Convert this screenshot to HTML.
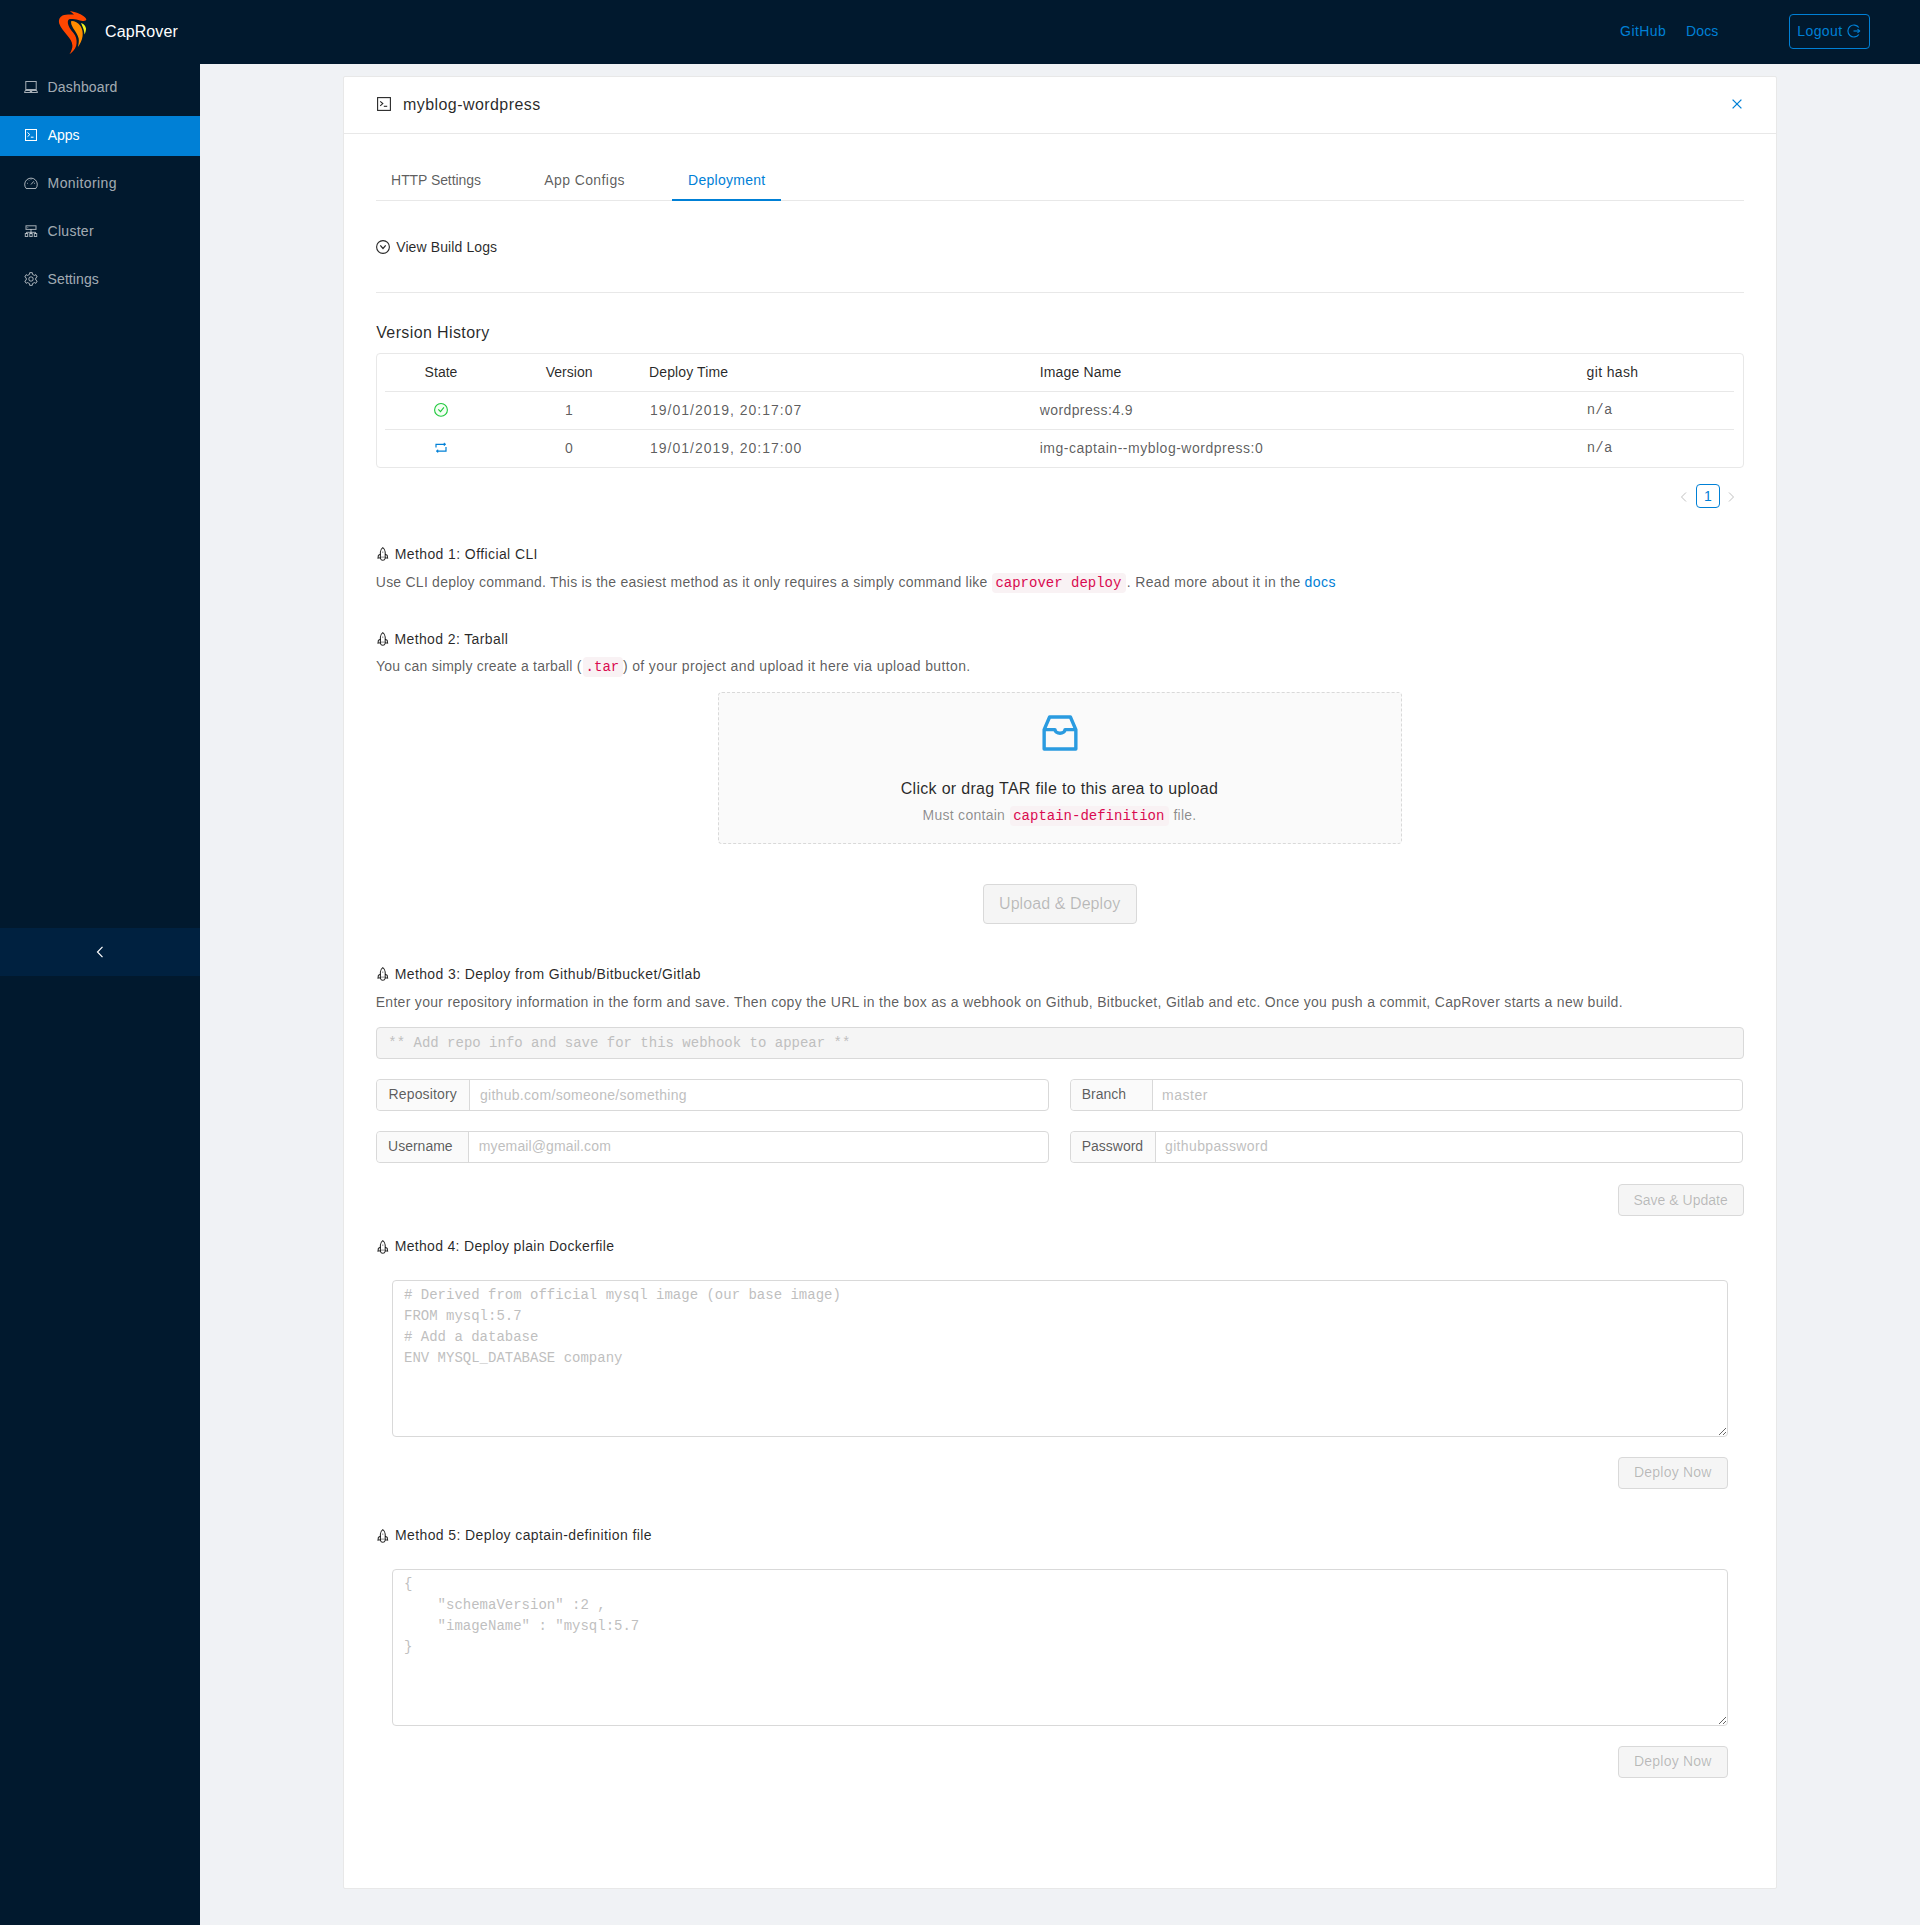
<!DOCTYPE html>
<html><head><meta charset="utf-8"><title>CapRover</title>
<style>
html,body{margin:0;padding:0}
body{width:1920px;height:1925px;position:relative;overflow:hidden;background:#f0f2f5;font-family:"Liberation Sans",sans-serif;font-size:14px;-webkit-font-smoothing:antialiased}
.a{position:absolute;box-sizing:border-box}
.t{position:absolute;white-space:nowrap;line-height:20px}
svg{position:absolute;overflow:visible}
.btn-d{position:absolute;box-sizing:border-box;background:#f5f5f5;border:1px solid #d9d9d9;border-radius:4px}
.ig{position:absolute;box-sizing:border-box;border:1px solid #d9d9d9;border-radius:4px;background:#fff;height:32px}
.ig .ad{position:absolute;left:0;top:0;bottom:0;background:#fafafa;border-right:1px solid #d9d9d9;border-radius:4px 0 0 4px}
.code{position:absolute;background:#f9f2f4;border-radius:4px;height:19.5px}
textarea{position:absolute;box-sizing:border-box;margin:0;border:1px solid #d9d9d9;border-radius:4px;background:#fff;padding:4px 11px;font-family:"Liberation Mono",monospace;font-size:14px;line-height:21px;color:rgba(0,0,0,.65);outline:none;resize:vertical}
textarea::placeholder{color:#bfbfbf;opacity:1}
</style></head>
<body>
<!-- header -->
<div class="a" style="left:0;top:0;width:1920px;height:64px;background:#01192e"></div>
<svg style="left:50px;top:0" width="50" height="64" viewBox="50 0 50 64">
 <path fill="#ff4600" d="M74.0 14.5 L69.9 10.9 C74 11.5 80 13 83.7 16.3 C85.5 17.5 86.5 19 86.3 19.8 C86 21.2 83 21.4 78.3 20.0 C75 19.2 71 18.8 69.1 19.3 C67.5 20 67.5 23 68.5 25.5 C69.5 29 73 32 75 35.2 C76.8 38.5 77 42.5 76.2 45.8 C75 49.5 72 52.5 69.4 54.3 C71.5 51 72.5 48 72.4 45.5 C72.2 41.5 70 38.5 67.5 35.7 C64 31.5 60.5 27.5 59.2 23.5 C58.3 20 59.5 17 62.5 15.5 C65.5 14.2 70 14.3 74.0 14.5 Z"/>
 <path fill="#ff8c00" d="M71.3 21.1 C74 20.8 78 22.5 80.5 26 C82.5 29 83 33 82.6 36 C82.2 40 80 44 77.8 47.3 C78.6 44 79.2 41 78.6 38.2 C77.8 35 75.5 31.5 73.2 28.2 C71.5 25.5 70.6 23 71.3 21.1 Z"/>
 <path fill="#f2f21e" d="M81 23 C83.5 23.8 85.8 26 86 28.5 C86.1 30.5 85.3 33 84.5 34.6 C84.3 32 83.8 29.5 82.8 27.3 C82.2 25.8 81.5 24.3 81 23 Z"/>
</svg>
<div class="a" style="left:1789px;top:14px;width:81px;height:35px;border:1px solid #0080d6;border-radius:4px"></div>
<svg style="left:1847px;top:24px" width="14" height="14" viewBox="0 0 14 14" fill="none" stroke="#0080d6" stroke-width="1.2">
 <path d="M11.8 3.5 A6 6 0 1 0 11.8 10.5"/><path d="M6.5 7 H12.5"/><path d="M10.5 5.2 L12.6 7 L10.5 8.8" stroke-width="1.1"/>
</svg>
<!-- sider -->
<div class="a" style="left:0;top:64px;width:200px;height:1861px;background:#01192e"></div>
<div class="a" style="left:0;top:116px;width:200px;height:40px;background:#0080d6"></div>
<svg style="left:24px;top:80px" width="14" height="14" viewBox="0 0 14 14" fill="none" stroke="rgba(255,255,255,.65)" stroke-width="1">
 <rect x="1.8" y="1.5" width="10.4" height="8"/><path d="M0.5 12.5 L1.3 10.5 H12.7 L13.5 12.5 Z"/><path d="M5.8 11.5 H8.2"/>
</svg>
<svg style="left:24px;top:128px" width="14" height="14" viewBox="0 0 14 14" fill="none" stroke="#fff" stroke-width="1">
 <rect x="1.5" y="1.5" width="11" height="11"/><path d="M3.5 4.5 L5.8 6.6 L3.5 8.7"/><path d="M6.8 9.2 H9.5"/>
</svg>
<svg style="left:24px;top:176px" width="14" height="14" viewBox="0 0 14 14" fill="none" stroke="rgba(255,255,255,.65)" stroke-width="1">
 <path d="M2.2 12.5 A6.3 6.3 0 1 1 11.8 12.5 Z"/><path d="M7 8.5 L9.8 5.3"/><path d="M3 7.3 H3.8 M10.2 7.3 H11 M4.5 3.8 L5 4.4 M7 2.8 V3.6"/>
</svg>
<svg style="left:24px;top:224px" width="14" height="14" viewBox="0 0 14 14" fill="none" stroke="rgba(255,255,255,.65)" stroke-width="1">
 <rect x="2" y="1.8" width="10" height="3.6"/><path d="M7 5.4 V10 M2.5 8.3 H11.5 M2.5 8.3 V9.5 M11.5 8.3 V9.5"/><rect x="1.3" y="9.5" width="2.4" height="3"/><rect x="5.8" y="9.5" width="2.4" height="3"/><rect x="10.3" y="9.5" width="2.4" height="3"/><path d="M3.5 3.6 H4.2"/>
</svg>
<svg style="left:24px;top:272px" width="14" height="14" viewBox="0 0 14 14" fill="none" stroke="rgba(255,255,255,.65)" stroke-width="1">
 <path id="gear" d="M5.55 2.32 L5.71 0.63 L8.29 0.63 L8.45 2.32 L10.33 3.41 L11.87 2.70 L13.16 4.93 L11.78 5.91 L11.78 8.09 L13.16 9.07 L11.87 11.30 L10.33 10.59 L8.45 11.68 L8.29 13.37 L5.71 13.37 L5.55 11.68 L3.67 10.59 L2.13 11.30 L0.84 9.07 L2.22 8.09 L2.22 5.91 L0.84 4.93 L2.13 2.70 L3.67 3.41 Z"/><circle cx="7" cy="7" r="2.2"/>
</svg>
<div class="a" style="left:0;top:928px;width:200px;height:48px;background:#002140"></div>
<svg style="left:95px;top:946px" width="10" height="12" viewBox="0 0 10 12" fill="none" stroke="#fff" stroke-width="1.2">
 <path d="M7.5 0.8 L2.5 6 L7.5 11.2"/>
</svg>
<!-- card -->
<div class="a" style="left:343px;top:76px;width:1434px;height:1813px;background:#fff;border:1px solid #e8e8e8;border-radius:2px"></div>
<div class="a" style="left:344px;top:133px;width:1432px;height:1px;background:#e8e8e8"></div>
<svg style="left:377px;top:97px" width="14" height="14" viewBox="0 0 14 14" fill="none" stroke="rgba(0,0,0,.85)" stroke-width="1.1">
 <rect x="0.6" y="0.6" width="12.8" height="12.8"/><path d="M3.2 4.3 L5.8 6.6 L3.2 8.9"/><path d="M6.8 9.3 H10.2"/>
</svg>
<svg style="left:1732px;top:99px" width="10" height="10" viewBox="0 0 10 10" fill="none" stroke="#0080d6" stroke-width="1.3">
 <path d="M0.6 0.6 L9.4 9.4 M9.4 0.6 L0.6 9.4"/>
</svg>
<!-- tabs -->
<div class="a" style="left:376px;top:200px;width:1368px;height:1px;background:#e8e8e8"></div>
<div class="a" style="left:672px;top:199px;width:109px;height:2px;background:#0080d6"></div>
<svg style="left:376px;top:240px" width="14" height="14" viewBox="0 0 14 14" fill="none" stroke="rgba(0,0,0,.85)" stroke-width="1.1">
 <circle cx="7" cy="7" r="6.4"/><path d="M4.3 5.4 L7 8.5 L9.7 5.4" stroke-width="1.2"/>
</svg>
<div class="a" style="left:376px;top:292px;width:1368px;height:1px;background:#e8e8e8"></div>
<!-- table -->
<div class="a" style="left:376px;top:353px;width:1368px;height:115px;border:1px solid #e8e8e8;border-radius:4px"></div>
<div class="a" style="left:385px;top:391px;width:1349px;height:1px;background:#e8e8e8"></div>
<div class="a" style="left:385px;top:429px;width:1349px;height:1px;background:#e8e8e8"></div>
<svg style="left:434px;top:403px" width="14" height="14" viewBox="0 0 14 14" fill="none" stroke="#1ec83c" stroke-width="1.1">
 <circle cx="7" cy="6.9" r="6.4" fill="#f3fff3"/><path d="M4.3 6.3 L6.5 8.7 L9.9 4.3"/>
</svg>
<svg style="left:435px;top:442px" width="12" height="12" viewBox="0 0 12 12" fill="none" stroke="#0080d6" stroke-width="1.2">
 <path d="M1 5.5 V2.3 H10"/><path d="M9 0.9 L10.9 2.3 L9 3.7 Z" fill="#0080d6" stroke-width="0.6"/>
 <path d="M11 5 V9.1 H2"/><path d="M3 7.7 L1.1 9.1 L3 10.5 Z" fill="#0080d6" stroke-width="0.6"/>
</svg>
<!-- pagination -->
<svg style="left:1680px;top:492px" width="8" height="10" viewBox="0 0 8 10" fill="none" stroke="rgba(0,0,0,.25)" stroke-width="1">
 <path d="M6 0.5 L1.5 5 L6 9.5"/>
</svg>
<div class="a" style="left:1696px;top:484px;width:24px;height:24px;border:1px solid #0080d6;border-radius:4px"></div>
<svg style="left:1728px;top:492px" width="8" height="10" viewBox="0 0 8 10" fill="none" stroke="rgba(0,0,0,.25)" stroke-width="1">
 <path d="M1 0.5 L5.5 5 L1 9.5"/>
</svg>
<!-- rockets -->
<svg style="left:377px;top:547.4px" width="12" height="14" viewBox="0 0 12 14" fill="none" stroke="rgba(0,0,0,.85)" stroke-width="1.05">
 <path d="M5.8 0.6 C4.2 1.8 3.4 3.2 3.4 5 V11.3 C3.8 12.6 4.8 13.3 5.8 13.3 C6.8 13.3 7.8 12.6 8.2 11.3 V5 C8.2 3.2 7.4 1.8 5.8 0.6 Z"/>
 <path d="M3.4 7.2 L1.4 8.4 L1 11.2 L3.4 10.8 M8.2 7.2 L10.2 8.4 L10.6 11.2 L8.2 10.8"/>
 <circle cx="5.8" cy="5.1" r="0.7" fill="rgba(0,0,0,.6)" stroke="none"/><path d="M3.9 10.1 H7.7" stroke="rgba(0,0,0,.45)"/>
</svg>
<svg style="left:377px;top:632.1px" width="12" height="14" viewBox="0 0 12 14" fill="none" stroke="rgba(0,0,0,.85)" stroke-width="1.05">
 <path d="M5.8 0.6 C4.2 1.8 3.4 3.2 3.4 5 V11.3 C3.8 12.6 4.8 13.3 5.8 13.3 C6.8 13.3 7.8 12.6 8.2 11.3 V5 C8.2 3.2 7.4 1.8 5.8 0.6 Z"/>
 <path d="M3.4 7.2 L1.4 8.4 L1 11.2 L3.4 10.8 M8.2 7.2 L10.2 8.4 L10.6 11.2 L8.2 10.8"/>
 <circle cx="5.8" cy="5.1" r="0.7" fill="rgba(0,0,0,.6)" stroke="none"/><path d="M3.9 10.1 H7.7" stroke="rgba(0,0,0,.45)"/>
</svg>
<svg style="left:377px;top:967.4px" width="12" height="14" viewBox="0 0 12 14" fill="none" stroke="rgba(0,0,0,.85)" stroke-width="1.05">
 <path d="M5.8 0.6 C4.2 1.8 3.4 3.2 3.4 5 V11.3 C3.8 12.6 4.8 13.3 5.8 13.3 C6.8 13.3 7.8 12.6 8.2 11.3 V5 C8.2 3.2 7.4 1.8 5.8 0.6 Z"/>
 <path d="M3.4 7.2 L1.4 8.4 L1 11.2 L3.4 10.8 M8.2 7.2 L10.2 8.4 L10.6 11.2 L8.2 10.8"/>
 <circle cx="5.8" cy="5.1" r="0.7" fill="rgba(0,0,0,.6)" stroke="none"/><path d="M3.9 10.1 H7.7" stroke="rgba(0,0,0,.45)"/>
</svg>
<svg style="left:377px;top:1239.5px" width="12" height="14" viewBox="0 0 12 14" fill="none" stroke="rgba(0,0,0,.85)" stroke-width="1.05">
 <path d="M5.8 0.6 C4.2 1.8 3.4 3.2 3.4 5 V11.3 C3.8 12.6 4.8 13.3 5.8 13.3 C6.8 13.3 7.8 12.6 8.2 11.3 V5 C8.2 3.2 7.4 1.8 5.8 0.6 Z"/>
 <path d="M3.4 7.2 L1.4 8.4 L1 11.2 L3.4 10.8 M8.2 7.2 L10.2 8.4 L10.6 11.2 L8.2 10.8"/>
 <circle cx="5.8" cy="5.1" r="0.7" fill="rgba(0,0,0,.6)" stroke="none"/><path d="M3.9 10.1 H7.7" stroke="rgba(0,0,0,.45)"/>
</svg>
<svg style="left:377px;top:1528.6px" width="12" height="14" viewBox="0 0 12 14" fill="none" stroke="rgba(0,0,0,.85)" stroke-width="1.05">
 <path d="M5.8 0.6 C4.2 1.8 3.4 3.2 3.4 5 V11.3 C3.8 12.6 4.8 13.3 5.8 13.3 C6.8 13.3 7.8 12.6 8.2 11.3 V5 C8.2 3.2 7.4 1.8 5.8 0.6 Z"/>
 <path d="M3.4 7.2 L1.4 8.4 L1 11.2 L3.4 10.8 M8.2 7.2 L10.2 8.4 L10.6 11.2 L8.2 10.8"/>
 <circle cx="5.8" cy="5.1" r="0.7" fill="rgba(0,0,0,.6)" stroke="none"/><path d="M3.9 10.1 H7.7" stroke="rgba(0,0,0,.45)"/>
</svg>
<!-- upload -->
<div class="a" style="left:718px;top:692px;width:684px;height:152px;border:1px dashed #d9d9d9;border-radius:4px;background:#fafafa"></div>
<svg style="left:1042px;top:715px" width="36" height="36" viewBox="0 0 36 36" fill="none" stroke="#2a9be0" stroke-width="3.4" stroke-linejoin="round">
 <path d="M2.15 34 V14.6 L7.6 2 H28.4 L33.85 14.6 V34 Z"/><path d="M2.15 14.6 H13 A5 3.6 0 0 0 23 14.6 H33.85"/>
</svg>
<!-- code bgs -->
<div class="code" style="left:992px;top:573px;width:133.5px"></div>
<div class="code" style="left:582.5px;top:657.2px;width:40.4px"></div>
<div class="code" style="left:1010px;top:806px;width:159px"></div>
<div class="btn-d" style="left:983px;top:884px;width:154px;height:40px"></div>
<!-- method 3 -->
<div class="a" style="left:376px;top:1027px;width:1368px;height:32px;background:#f5f5f5;border:1px solid #d9d9d9;border-radius:4px"></div>
<div class="ig" style="left:376px;top:1079px;width:673px"><div class="ad" style="width:92px"></div></div>
<div class="ig" style="left:1070px;top:1079px;width:673px"><div class="ad" style="width:81px"></div></div>
<div class="ig" style="left:376px;top:1131px;width:673px"><div class="ad" style="width:91px"></div></div>
<div class="ig" style="left:1070px;top:1131px;width:673px"><div class="ad" style="width:84px"></div></div>
<div class="btn-d" style="left:1618px;top:1184px;width:126px;height:32px"></div>
<!-- method 4 -->
<textarea style="left:392px;top:1280px;width:1336px;height:157px" placeholder="# Derived from official mysql image (our base image)&#10;FROM mysql:5.7&#10;# Add a database&#10;ENV MYSQL_DATABASE company"></textarea>
<div class="btn-d" style="left:1618px;top:1457px;width:110px;height:32px"></div>
<!-- method 5 -->
<textarea style="left:392px;top:1569px;width:1336px;height:157px" placeholder="{&#10;    &quot;schemaVersion&quot; :2 ,&#10;    &quot;imageName&quot; : &quot;mysql:5.7&#10;}"></textarea>
<div class="btn-d" style="left:1618px;top:1746px;width:110px;height:32px"></div>
<div class="t" style="left:105.00px;top:22.46px;font-size:16px;color:#fff;letter-spacing:0.110px;">CapRover</div>
<div class="t" style="left:1620.10px;top:21.05px;font-size:14px;color:#0080d6;letter-spacing:0.426px;">GitHub</div>
<div class="t" style="left:1686.10px;top:21.05px;font-size:14px;color:#0080d6;letter-spacing:0.101px;">Docs</div>
<div class="t" style="left:1797.20px;top:21.05px;font-size:14px;color:#0080d6;letter-spacing:0.436px;">Logout</div>
<div class="t" style="left:47.60px;top:77.15px;font-size:14px;color:rgba(255,255,255,.65);letter-spacing:0.151px;">Dashboard</div>
<div class="t" style="left:47.70px;top:125.15px;font-size:14px;color:#fff;">Apps</div>
<div class="t" style="left:47.60px;top:173.15px;font-size:14px;color:rgba(255,255,255,.65);letter-spacing:0.404px;">Monitoring</div>
<div class="t" style="left:47.60px;top:221.15px;font-size:14px;color:rgba(255,255,255,.65);letter-spacing:0.276px;">Cluster</div>
<div class="t" style="left:47.60px;top:269.15px;font-size:14px;color:rgba(255,255,255,.65);letter-spacing:0.088px;">Settings</div>
<div class="t" style="left:402.95px;top:95.06px;font-size:16px;color:rgba(0,0,0,.85);letter-spacing:0.436px;">myblog-wordpress</div>
<div class="t" style="left:391.10px;top:169.65px;font-size:14px;color:rgba(0,0,0,.65);letter-spacing:-0.077px;">HTTP Settings</div>
<div class="t" style="left:544.20px;top:169.65px;font-size:14px;color:rgba(0,0,0,.65);letter-spacing:0.413px;">App Configs</div>
<div class="t" style="left:688.00px;top:169.65px;font-size:14px;color:#0080d6;letter-spacing:0.277px;">Deployment</div>
<div class="t" style="left:396.20px;top:237.05px;font-size:14px;color:rgba(0,0,0,.85);letter-spacing:0.110px;">View Build Logs</div>
<div class="t" style="left:376.20px;top:323.26px;font-size:16px;color:rgba(0,0,0,.85);letter-spacing:0.386px;">Version History</div>
<div class="t" style="left:424.60px;top:362.45px;font-size:14px;color:rgba(0,0,0,.85);letter-spacing:0.028px;">State</div>
<div class="t" style="left:545.70px;top:362.45px;font-size:14px;color:rgba(0,0,0,.85);letter-spacing:0.034px;">Version</div>
<div class="t" style="left:649.00px;top:362.45px;font-size:14px;color:rgba(0,0,0,.85);letter-spacing:0.124px;">Deploy Time</div>
<div class="t" style="left:1039.70px;top:362.45px;font-size:14px;color:rgba(0,0,0,.85);letter-spacing:0.162px;">Image Name</div>
<div class="t" style="left:1586.50px;top:362.45px;font-size:14px;color:rgba(0,0,0,.85);letter-spacing:0.367px;">git hash</div>
<div class="t" style="left:565.11px;top:400.05px;font-size:14px;color:rgba(0,0,0,.65);">1</div>
<div class="t" style="left:650.00px;top:399.95px;font-size:14px;color:rgba(0,0,0,.65);letter-spacing:0.992px;">19/01/2019, 20:17:07</div>
<div class="t" style="left:1039.70px;top:399.95px;font-size:14px;color:rgba(0,0,0,.65);letter-spacing:0.406px;">wordpress:4.9</div>
<div class="t" style="left:1586.70px;top:400.17px;font-size:14px;color:rgba(0,0,0,.65);font-family:'Liberation Mono', monospace;letter-spacing:0.248px;">n/a</div>
<div class="t" style="left:565.11px;top:437.95px;font-size:14px;color:rgba(0,0,0,.65);">0</div>
<div class="t" style="left:650.00px;top:437.95px;font-size:14px;color:rgba(0,0,0,.65);letter-spacing:0.992px;">19/01/2019, 20:17:00</div>
<div class="t" style="left:1039.70px;top:437.95px;font-size:14px;color:rgba(0,0,0,.65);letter-spacing:0.509px;">img-captain--myblog-wordpress:0</div>
<div class="t" style="left:1586.70px;top:437.77px;font-size:14px;color:rgba(0,0,0,.65);font-family:'Liberation Mono', monospace;letter-spacing:0.248px;">n/a</div>
<div class="t" style="left:1704.11px;top:485.85px;font-size:14px;color:#0080d6;">1</div>
<div class="t" style="left:394.70px;top:543.95px;font-size:14px;color:rgba(0,0,0,.85);letter-spacing:0.402px;">Method 1: Official CLI</div>
<div class="t" style="left:375.80px;top:571.65px;font-size:14px;color:rgba(0,0,0,.65);letter-spacing:0.233px;">Use CLI deploy command. This is the easiest method as it only requires a simply command like</div>
<div class="t" style="left:995.40px;top:572.77px;font-size:14px;color:#d90a50;font-family:'Liberation Mono', monospace;">caprover deploy</div>
<div class="t" style="left:1126.80px;top:571.65px;font-size:14px;color:rgba(0,0,0,.65);letter-spacing:0.331px;">. Read more about it in the</div>
<div class="t" style="left:1304.50px;top:571.65px;font-size:14px;color:#0080d6;letter-spacing:0.509px;">docs</div>
<div class="t" style="left:394.40px;top:628.65px;font-size:14px;color:rgba(0,0,0,.85);letter-spacing:0.394px;">Method 2: Tarball</div>
<div class="t" style="left:376.00px;top:656.35px;font-size:14px;color:rgba(0,0,0,.65);letter-spacing:0.211px;">You can simply create a tarball (</div>
<div class="t" style="left:585.60px;top:657.47px;font-size:14px;color:#d90a50;font-family:'Liberation Mono', monospace;">.tar</div>
<div class="t" style="left:622.95px;top:656.35px;font-size:14px;color:rgba(0,0,0,.65);letter-spacing:0.363px;">) of your project and upload it here via upload button.</div>
<div class="t" style="left:900.70px;top:779.26px;font-size:16px;color:rgba(0,0,0,.85);letter-spacing:0.310px;">Click or drag TAR file to this area to upload</div>
<div class="t" style="left:922.50px;top:805.35px;font-size:14px;color:rgba(0,0,0,.45);letter-spacing:0.275px;">Must contain</div>
<div class="t" style="left:1013.20px;top:806.47px;font-size:14px;color:#d90a50;font-family:'Liberation Mono', monospace;">captain-definition</div>
<div class="t" style="left:1173.50px;top:805.35px;font-size:14px;color:rgba(0,0,0,.45);letter-spacing:0.228px;">file.</div>
<div class="t" style="left:999.00px;top:894.16px;font-size:16px;color:rgba(0,0,0,.25);letter-spacing:0.081px;">Upload &amp; Deploy</div>
<div class="t" style="left:394.70px;top:963.95px;font-size:14px;color:rgba(0,0,0,.85);letter-spacing:0.389px;">Method 3: Deploy from Github/Bitbucket/Gitlab</div>
<div class="t" style="left:375.70px;top:992.15px;font-size:14px;color:rgba(0,0,0,.65);letter-spacing:0.301px;">Enter your repository information in the form and save. Then copy the URL in the box as a webhook on Github, Bitbucket, Gitlab and etc. Once you push a commit, CapRover starts a new build.</div>
<div class="t" style="left:388.30px;top:1033.37px;font-size:14px;color:#bfbfbf;font-family:'Liberation Mono', monospace;">** Add repo info and save for this webhook to appear **</div>
<div class="t" style="left:388.50px;top:1084.45px;font-size:14px;color:rgba(0,0,0,.65);letter-spacing:0.154px;">Repository</div>
<div class="t" style="left:479.90px;top:1084.65px;font-size:14px;color:#bfbfbf;letter-spacing:0.306px;">github.com/someone/something</div>
<div class="t" style="left:1081.70px;top:1084.45px;font-size:14px;color:rgba(0,0,0,.65);">Branch</div>
<div class="t" style="left:1162.00px;top:1084.65px;font-size:14px;color:#bfbfbf;letter-spacing:0.523px;">master</div>
<div class="t" style="left:388.10px;top:1136.15px;font-size:14px;color:rgba(0,0,0,.65);letter-spacing:-0.011px;">Username</div>
<div class="t" style="left:478.80px;top:1136.35px;font-size:14px;color:#bfbfbf;letter-spacing:0.117px;">myemail@gmail.com</div>
<div class="t" style="left:1081.70px;top:1136.15px;font-size:14px;color:rgba(0,0,0,.65);">Password</div>
<div class="t" style="left:1165.00px;top:1136.35px;font-size:14px;color:#bfbfbf;letter-spacing:0.357px;">githubpassword</div>
<div class="t" style="left:1633.50px;top:1189.65px;font-size:14px;color:rgba(0,0,0,.25);">Save &amp; Update</div>
<div class="t" style="left:394.70px;top:1236.05px;font-size:14px;color:rgba(0,0,0,.85);letter-spacing:0.312px;">Method 4: Deploy plain Dockerfile</div>
<div class="t" style="left:1634.00px;top:1462.25px;font-size:14px;color:rgba(0,0,0,.25);letter-spacing:0.214px;">Deploy Now</div>
<div class="t" style="left:395.00px;top:1525.15px;font-size:14px;color:rgba(0,0,0,.85);letter-spacing:0.391px;">Method 5: Deploy captain-definition file</div>
<div class="t" style="left:1634.00px;top:1751.45px;font-size:14px;color:rgba(0,0,0,.25);letter-spacing:0.214px;">Deploy Now</div>
</body></html>
